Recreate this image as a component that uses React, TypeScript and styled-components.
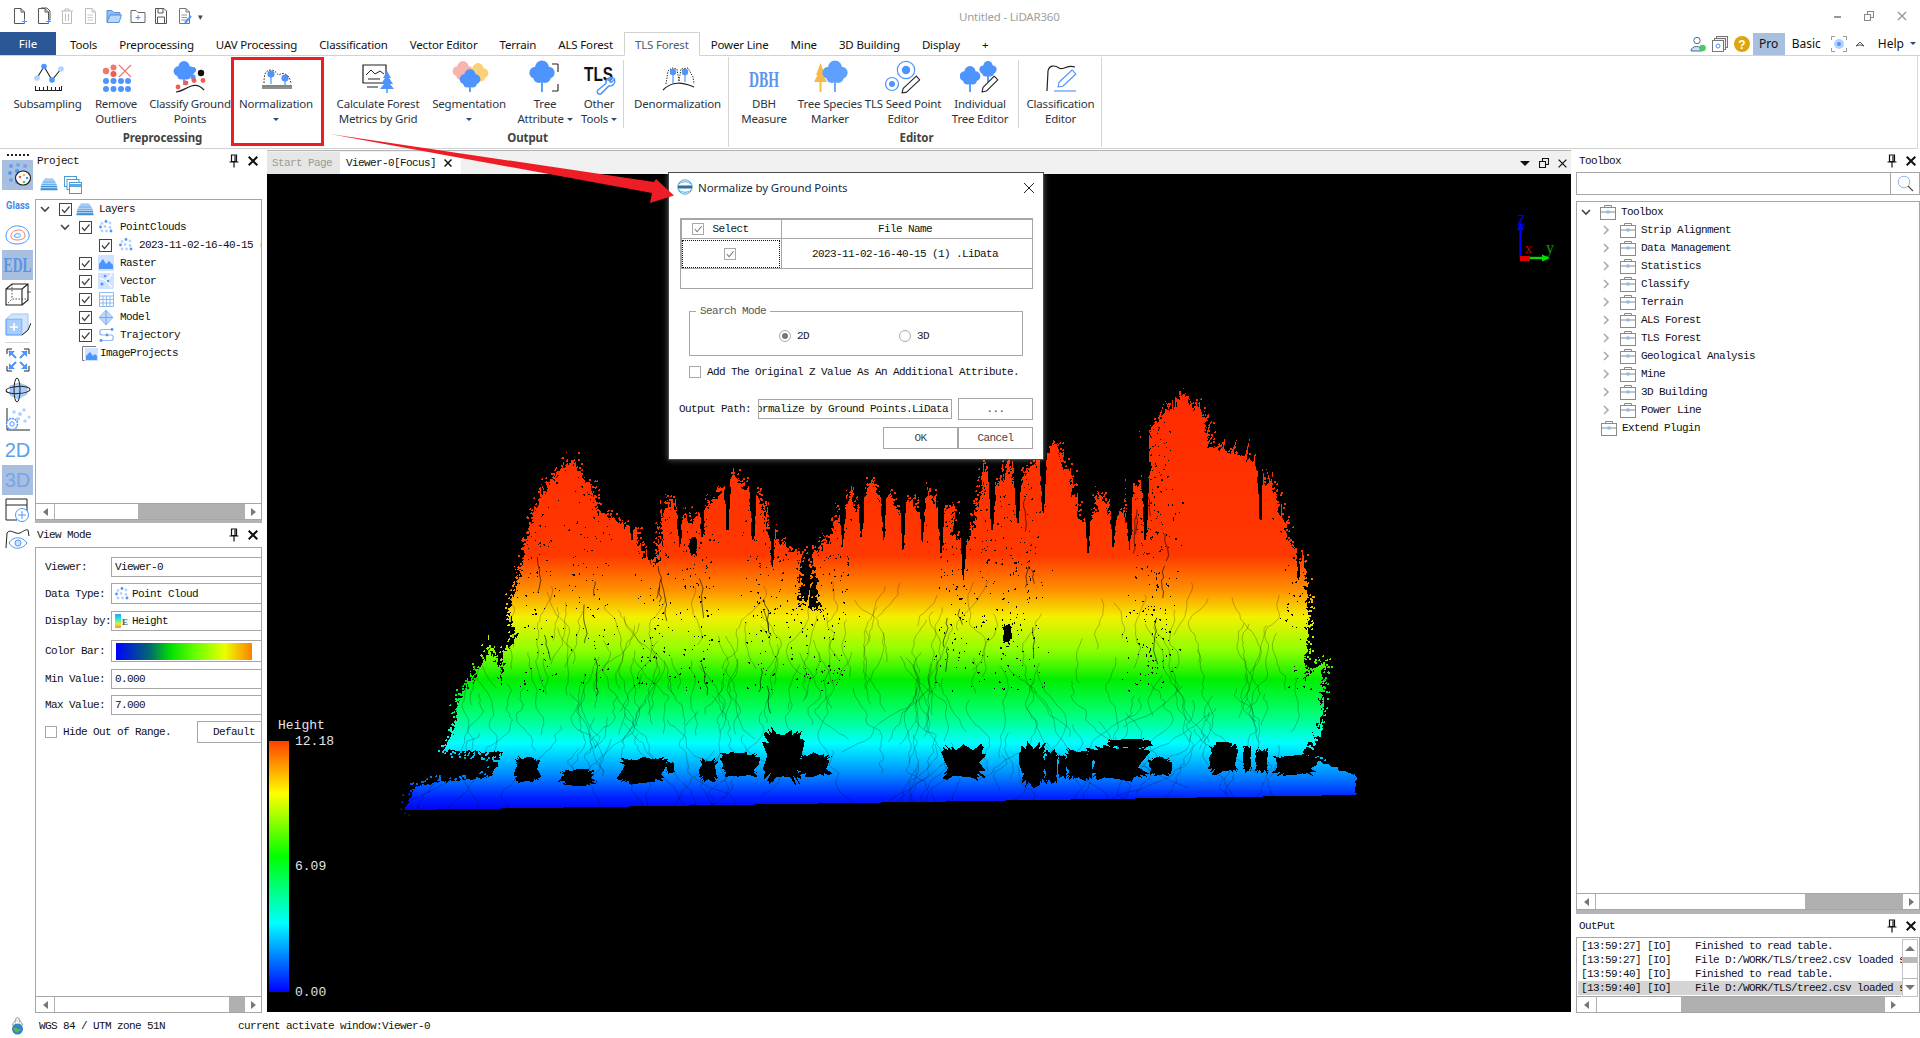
import React from "react";
import styled, { createGlobalStyle } from "styled-components";

const SANS = `"Noto Sans", "Open Sans", sans-serif`;
const MONO = `"Liberation Mono", "Noto Sans CJK SC", monospace`;
const BLUE = "#4d94ff";
const LIGHT = "#b3d2ff";
const HILITE = "#a9bfdf";
const LINE = "#a6a6a6";

const Global = createGlobalStyle`
  html, body { margin: 0; padding: 0; width: 1920px; height: 1038px; overflow: hidden; background: #fff; }
  #root { width: 1920px; height: 1038px; }
  * { box-sizing: border-box; }
`;

const Page = styled.div`
  position: relative;
  width: 1920px;
  height: 1038px;
  display: flex;
  flex-direction: column;
  overflow: hidden;
  background: #fff;
  font-family: ${SANS};
  font-size: 11.5px;
  color: #222;
`;

/* ---------- title bar ---------- */
const TitleBar = styled.div`
  height: 32px;
  display: flex;
  align-items: center;
  flex: none;
`;
const Quick = styled.div`
  width: 959px;
  padding-left: 12px;
  display: flex;
  gap: 7.5px;
  align-items: center;
`;
const QuickCaret = styled.span`
  font-size: 9px;
  color: #444;
  margin-left: -2px;
  line-height: 1;
`;
const AppTitle = styled.div`
  color: #a0a0a0;
  font-size: 11.5px;
  letter-spacing: -0.2px;
  width: 104px;
  white-space: nowrap;
`;
const WinControls = styled.div`
  margin-left: auto;
  display: flex;
  align-items: center;
  gap: 23px;
  padding-right: 13px;
`;

/* ---------- ribbon tabs ---------- */
const TabRow = styled.div`
  height: 24px;
  flex: none;
  display: flex;
  align-items: stretch;
  border-bottom: 1px solid #d2d2d2;
`;
const FileTab = styled.div`
  width: 56px;
  margin: 0 3px 0 0;
  background: #2b5797;
  color: #fff;
  display: flex;
  align-items: center;
  justify-content: center;
  font-size: 11.5px;
`;
const MenuTab = styled.div<{ $active?: boolean }>`
  padding: 1px 11px 0;
  display: flex;
  align-items: center;
  white-space: nowrap;
  font-size: 11.5px;
  letter-spacing: -0.16px;
  margin-bottom: ${(p) => (p.$active ? "-1px" : "0")};
  color: ${(p) => (p.$active ? "#4c5f70" : "#111")};
  background: #fff;
  ${(p) => (p.$active ? "border: 1px solid #d2d2d2; border-bottom: 1px solid #fff; padding: 1px 10px 0;" : "")}
`;
const TabTools = styled.div`
  margin-left: auto;
  display: flex;
  align-items: center;
  padding-right: 4px;
`;
const ModeTag = styled.div<{ $on?: boolean; $mr?: number }>`
  height: 22px;
  display: flex;
  align-items: center;
  justify-content: center;
  width: ${(p) => (p.$on ? "32px" : "auto")};
  margin-right: ${(p) => p.$mr ?? 10}px;
  background: ${(p) => (p.$on ? HILITE : "transparent")};
  font-size: 12px;
  color: #111;
`;
const DownCaret = styled.span`
  display: inline-block;
  width: 0;
  height: 0;
  border-left: 3px solid transparent;
  border-right: 3px solid transparent;
  border-top: 3px solid #2d4a77;
  vertical-align: middle;
`;

/* ---------- ribbon ---------- */
const Ribbon = styled.div`
  height: 93px;
  flex: none;
  display: flex;
  margin-right: 2px;
  border-right: 1px solid #d9d9d9;
  border-bottom: 1px solid #d2d2d2;
`;
const Group = styled.div<{ $start: number; $line?: boolean; $w: number }>`
  width: ${(p) => p.$w}px;
  padding-left: ${(p) => p.$start}px;
  height: 90px;
  margin-top: 1px;
  display: flex;
  flex-direction: column;
  border-right: ${(p) => (p.$line ? "1px solid #d5d5d5" : "none")};
`;
const GroupRow = styled.div`
  height: 73px;
  display: flex;
`;
const GroupName = styled.div<{ $pr?: number }>`
  height: 15px;
  line-height: 15px;
  text-align: center;
  font-weight: 700;
  font-size: 11.5px;
  letter-spacing: -0.1px;
  color: #434343;
  margin-right: ${(p) => p.$pr ?? 0}px;
`;
const Item = styled.div<{ $w: number }>`
  width: ${(p) => p.$w}px;
  flex: none;
  display: flex;
  flex-direction: column;
  align-items: center;
`;
const ItemIcon = styled.div`
  height: 39px;
  width: 40px;
  flex: none;
`;
const ItemText = styled.div`
  line-height: 15px;
  text-align: center;
  white-space: pre;
  color: #2c3440;
  font-size: 11.5px;
  letter-spacing: -0.2px;
`;
const InnerSep = styled.div<{ $tight?: boolean }>`
  width: 1px;
  height: 68px;
  margin: ${(p) => (p.$tight ? "3px 1px 0 0" : "3px 3px 0 3px")};
  background: #d5d5d5;
  flex: none;
`;

/* ---------- main ---------- */
const Main = styled.div`
  height: 863px;
  flex: none;
  display: flex;
  margin-top: 1px;
`;
const ToolRail = styled.div`
  width: 35px;
  flex: none;
  display: flex;
  flex-direction: column;
  padding: 0 2px 0 2px;
`;
const Grip = styled.div`
  height: 10px;
  display: flex;
  justify-content: center;
  align-items: center;
  gap: 2px;
  i { width: 2px; height: 2px; background: #222; display: block; }
`;
const RailBtn = styled.div<{ $on?: boolean }>`
  height: 30px;
  display: flex;
  align-items: center;
  justify-content: center;
  overflow: hidden;
  background: ${(p) => (p.$on ? HILITE : "transparent")};
  flex: none;
`;
const RailSep = styled.div`
  height: 1px;
  margin: 2px 3px;
  background: #d8d8d8;
  flex: none;
`;
const GlassText = styled.span`
  color: #3f8ae8;
  font: 700 11px "Roboto", sans-serif;
  transform: scaleX(0.85);
`;
const EdlText = styled.span`
  color: #5a93e6;
  font: 700 20px "Liberation Serif", serif;
  transform: scaleX(0.68);
`;
const DimText = styled.span<{ $on?: boolean }>`
  color: ${(p) => (p.$on ? "#74a6ea" : "#5d9fee")};
  font: 400 20px "Liberation Sans", sans-serif;
`;

const Dock = styled.div<{ $w: number }>`
  width: ${(p) => p.$w}px;
  flex: none;
  display: flex;
  flex-direction: column;
  background: #fff;
`;
const PanelHead = styled.div<{ $h: number }>`
  height: ${(p) => p.$h}px;
  flex: none;
  display: flex;
  align-items: center;
  padding: 0 4px 0 2px;
`;
const PanelName = styled.div<{ $pl?: number }>`
  font-family: ${MONO};
  font-size: 11px;
  letter-spacing: -0.6px;
  color: #111;
  flex: 1;
  padding-left: ${(p) => p.$pl ?? 0}px;
`;
const HeadIcons = styled.div`
  display: flex;
  align-items: center;
  gap: 9px;
`;
const PanelTools = styled.div`
  height: 27px;
  flex: none;
  display: flex;
  align-items: center;
  gap: 6px;
  padding: 0 0 2px 5px;
`;
const Box = styled.div<{ $grow?: boolean; $h?: number }>`
  ${(p) => (p.$grow ? "flex: 1; min-height: 0;" : `height: ${p.$h}px; flex: none;`)}
  border: 1px solid ${LINE};
  background: #fff;
  display: flex;
  flex-direction: column;
  overflow: hidden;
`;
const BoxBody = styled.div<{ $pt?: number }>`
  flex: 1;
  min-height: 0;
  overflow: hidden;
  padding-top: ${(p) => p.$pt ?? 0}px;
`;
const TreeRow = styled.div<{ $indent: number }>`
  height: 18px;
  display: flex;
  align-items: center;
  padding-left: ${(p) => p.$indent}px;
  white-space: nowrap;
  font-family: ${MONO};
  font-size: 11px;
  letter-spacing: -0.6px;
  color: #111;
`;
const ChevSlot = styled.span`
  display: inline-flex;
  align-items: center;
  width: 23px;
  padding-left: 4px;
  flex: none;
`;
const Slot = styled.span<{ $w: number }>`
  display: inline-flex;
  align-items: center;
  justify-content: center;
  width: ${(p) => p.$w}px;
  flex: none;
`;
const RowLabel = styled.span<{ $ml?: number }>`
  margin-left: ${(p) => p.$ml ?? 0}px;
`;
const Check = styled.span<{ $size?: number; $soft?: boolean; $mr?: number }>`
  width: ${(p) => p.$size ?? 13}px;
  height: ${(p) => p.$size ?? 13}px;
  flex: none;
  margin-right: ${(p) => p.$mr ?? 0}px;
  display: inline-flex;
  align-items: center;
  justify-content: center;
  border: 1px solid ${(p) => (p.$soft ? "#a8a8a8" : "#444")};
  background: #fff;
`;
const ThickRule = styled.div<{ $h?: number }>`
  height: ${(p) => p.$h ?? 3}px;
  flex: none;
  background: #b4b4b4;
`;
const Scroll = styled.div<{ $mr?: number }>`
  height: 16px;
  flex: none;
  display: flex;
  background: #b0b0b0;
  border-top: 1px solid ${LINE};
  margin-right: ${(p) => p.$mr ?? 0}px;
`;
const ScrollBtn = styled.div<{ $w?: number }>`
  width: ${(p) => p.$w ?? 17}px;
  flex: none;
  background: #fff;
  display: flex;
  align-items: center;
  justify-content: center;
`;
const ScrollThumb = styled.div<{ $w: number }>`
  width: ${(p) => p.$w}px;
  margin-left: 1px;
  flex: none;
  background: #fff;
`;
const ScrollTrack = styled.div`
  flex: 1;
`;
const Tri = styled.span<{ $dir: "l" | "r" | "u" | "d"; $c?: string }>`
  width: 0;
  height: 0;
  ${(p) => {
    const c = p.$c ?? "#777";
    if (p.$dir === "l") return `border-top:4px solid transparent;border-bottom:4px solid transparent;border-right:5px solid ${c};`;
    if (p.$dir === "r") return `border-top:4px solid transparent;border-bottom:4px solid transparent;border-left:5px solid ${c};`;
    if (p.$dir === "u") return `border-left:5px solid transparent;border-right:5px solid transparent;border-bottom:5px solid ${c};`;
    return `border-left:5px solid transparent;border-right:5px solid transparent;border-top:5px solid ${c};`;
  }}
`;

/* ---------- view mode form ---------- */
const FormRow = styled.div<{ $h: number; $mt: number }>`
  height: ${(p) => p.$h}px;
  margin-top: ${(p) => p.$mt}px;
  display: flex;
  align-items: center;
  padding-left: 9px;
  font-family: ${MONO};
  font-size: 11px;
  letter-spacing: -0.6px;
  color: #111;
  white-space: nowrap;
`;
const FormLabel = styled.div`
  width: 66px;
  flex: none;
`;
const Field = styled.div`
  width: 170px;
  height: 100%;
  flex: none;
  border: 1px solid ${LINE};
  display: flex;
  align-items: center;
  padding-left: 3px;
  gap: 3px;
  background: #fff;
`;
const BarSwatch = styled.div`
  width: 136px;
  height: 17px;
  margin-left: 1px;
  background: linear-gradient(90deg, #0000ff 0%, #006a70 25%, #00e000 40%, #66ff00 58%, #eaff00 80%, #ff8000 100%);
`;
const DefaultBtn = styled.div`
  width: 80px;
  margin-left: 26px;
  height: 100%;
  flex: none;
  border: 1px solid ${LINE};
  display: flex;
  align-items: center;
  padding-left: 15px;
`;

/* ---------- centre ---------- */
const Centre = styled.div`
  width: 1304px;
  flex: none;
  display: flex;
  flex-direction: column;
  margin: 0 5px 0 5px;
  border-top: 1px solid #b5b5b5;
`;
const DocTabs = styled.div`
  height: 23px;
  flex: none;
  display: flex;
  background: #f0f0f0;
  font-family: ${MONO};
  font-size: 11px;
  letter-spacing: -0.6px;
  padding-top: 1px;
`;
const DocTab = styled.div<{ $active?: boolean }>`
  width: ${(p) => (p.$active ? 121 : 73)}px;
  padding-left: ${(p) => (p.$active ? 6 : 5)}px;
  display: flex;
  align-items: center;
  gap: 8px;
  background: ${(p) => (p.$active ? "#fff" : "#e6e6e6")};
  color: ${(p) => (p.$active ? "#111" : "#9a9a9a")};
`;
const DocTools = styled.div`
  margin-left: auto;
  display: flex;
  align-items: center;
  gap: 9px;
  padding-right: 4px;
`;
const Viewer = styled.div`
  position: relative;
  height: 838px;
  flex: none;
  background: #000;
  overflow: hidden;
`;
const CloudSvg = styled.svg`
  position: absolute;
  inset: 0;
  width: 1304px;
  height: 838px;
`;
const AxisSvg = styled.svg`
  position: absolute;
  left: 1250px;
  top: 36px;
`;
const Legend = styled.div`
  position: absolute;
  left: 2px;
  top: 567px;
  width: 20px;
  height: 251px;
  background: linear-gradient(0deg, #0000ff 0%, #00ffff 27.5%, #00ff00 54%, #ffff00 79%, #ff4000 100%);
`;
const LegendText = styled.div<{ $x: number; $y: number }>`
  position: absolute;
  left: ${(p) => p.$x}px;
  top: ${(p) => p.$y}px;
  color: #e4e4e4;
  font: 13px/14px ${MONO};
`;

/* ---------- right ---------- */
const SearchRow = styled.div`
  height: 23px;
  flex: none;
  display: flex;
  border: 1px solid ${LINE};
`;
const SearchInput = styled.div`
  flex: 1;
  border-right: 1px solid ${LINE};
`;
const SearchBtn = styled.div`
  width: 28px;
  flex: none;
  display: flex;
  align-items: center;
  justify-content: center;
`;
const Gap = styled.div<{ $h: number }>`
  height: ${(p) => p.$h}px;
  flex: none;
`;
const LogWrap = styled.div`
  flex: 1;
  min-height: 0;
  display: flex;
`;
const LogList = styled.div`
  width: 325px;
  flex: none;
  padding: 1px 0 0 1px;
  overflow: hidden;
`;
const LogRow = styled.div<{ $on?: boolean }>`
  height: 14px;
  line-height: 14px;
  padding-left: 3px;
  white-space: pre;
  overflow: hidden;
  font-family: ${MONO};
  font-size: 11px;
  letter-spacing: -0.6px;
  background: ${(p) => (p.$on ? "#d4d4d4" : "transparent")};
  color: #111;
`;
const VScroll = styled.div`
  width: 16px;
  flex: none;
  margin-top: 1px;
  display: flex;
  flex-direction: column;
  border: 1px solid #c4c4c4;
  background: #b8b8b8;
  height: 58px;
`;
const VBtn = styled.div`
  height: 17px;
  background: #fff;
  display: flex;
  align-items: center;
  justify-content: center;
  flex: none;
`;
const VThumb = styled.div`
  flex: 1;
  background: #fff;
  margin-top: 6px;
  margin-bottom: 1px;
`;

/* ---------- status ---------- */
const StatusBar = styled.div`
  height: 25px;
  flex: none;
  display: flex;
  align-items: center;
  padding-left: 9px;
  font-family: ${MONO};
  font-size: 11px;
  letter-spacing: -0.6px;
  color: #111;
  background: #fff;
`;
const StatusA = styled.div`
  margin-left: 13px;
  width: 199px;
`;

/* ---------- overlays ---------- */
const Annotation = styled.svg`
  position: absolute;
  left: 0;
  top: 0;
  width: 1920px;
  height: 1038px;
  z-index: 5;
  pointer-events: none;
`;
const RedFrame = styled.div`
  position: absolute;
  left: 231px;
  top: 57px;
  width: 93px;
  height: 89px;
  border: 3px solid #ee1c25;
  z-index: 5;
`;
const Dialog = styled.div`
  position: absolute;
  left: 668px;
  top: 172px;
  width: 376px;
  height: 288px;
  z-index: 4;
  background: #fff;
  border: 1px solid #4a4a4a;
  box-shadow: 0 0 6px rgba(255, 255, 255, 0.35);
  display: flex;
  flex-direction: column;
  padding: 0 10px 0 11px;
  font-family: ${MONO};
  font-size: 11px;
  letter-spacing: -0.6px;
  color: #222;
`;
const DialogHead = styled.div`
  height: 28px;
  flex: none;
  display: flex;
  align-items: center;
  gap: 5px;
  margin-left: -3px;
  font-family: ${SANS};
  font-size: 11.5px;
  letter-spacing: -0.1px;
  color: #1a2a3a;
`;
const DialogClose = styled.div`
  margin-left: auto;
  display: flex;
  margin-right: -2px;
  margin-top: 1px;
`;
const FileTable = styled.div`
  margin-top: 17px;
  height: 71px;
  flex: none;
  border: 1px solid ${LINE};
  display: grid;
  grid-template-columns: 100px 1fr;
  grid-template-rows: 20px 30px 1fr;
`;
const HeadCell = styled.div<{ $pr?: number }>`
  display: flex;
  align-items: center;
  justify-content: center;
  gap: 8px;
  padding-right: ${(p) => p.$pr ?? 0}px;
  border-top: 1px solid ${LINE};
  border-bottom: 1px solid ${LINE};
  border-left: 1px solid ${LINE};
  color: #111;
`;
const BodyCell = styled.div<{ $focus?: boolean; $pr?: number }>`
  display: flex;
  align-items: center;
  justify-content: center;
  padding-right: ${(p) => p.$pr ?? 0}px;
  border-bottom: 1px solid ${LINE};
  border-left: 1px solid ${LINE};
  color: #111;
  ${(p) => (p.$focus ? "outline: 1px dotted #111; outline-offset: -2px;" : "")}
`;
const EmptyCell = styled.div`
  grid-column: 1 / span 2;
`;
const SearchGroup = styled.div`
  position: relative;
  margin: 22px 10px 0 9px;
  height: 45px;
  flex: none;
  border: 1px solid ${LINE};
  display: flex;
  align-items: center;
  padding: 5px 0 0 89px;
`;
const GroupLegend = styled.div`
  position: absolute;
  left: 6px;
  top: -7px;
  background: #fff;
  padding: 0 4px;
  color: #555;
`;
const RadioItem = styled.div`
  width: 120px;
  flex: none;
  display: flex;
  align-items: center;
  gap: 6px;
`;
const RadioDot = styled.span<{ $on?: boolean }>`
  width: 12px;
  height: 12px;
  border-radius: 50%;
  border: 1px solid #aaa;
  display: flex;
  align-items: center;
  justify-content: center;
  &::after {
    content: "";
    width: 6px;
    height: 6px;
    border-radius: 50%;
    background: ${(p) => (p.$on ? "#777" : "transparent")};
  }
`;
const ZRow = styled.div`
  margin: 8px 0 0 9px;
  height: 16px;
  flex: none;
  display: flex;
  align-items: center;
  gap: 6px;
  white-space: nowrap;
  color: #111;
`;
const PathRow = styled.div`
  margin: 18px 0 0 -1px;
  height: 22px;
  flex: none;
  display: flex;
  align-items: center;
  color: #111;
`;
const PathLabel = styled.div`
  width: 79px;
  flex: none;
`;
const PathInput = styled.div`
  width: 194px;
  height: 20px;
  flex: none;
  border: 1px solid ${LINE};
  overflow: hidden;
  display: flex;
  justify-content: flex-end;
  align-items: center;
  padding-right: 3px;
  white-space: nowrap;
`;
const DlgBtn = styled.div<{ $w: number; $ml?: number }>`
  width: ${(p) => p.$w}px;
  height: 22px;
  flex: none;
  margin-left: ${(p) => p.$ml ?? 0}px;
  border: 1px solid ${LINE};
  display: flex;
  align-items: center;
  justify-content: center;
  color: #444;
`;
const BtnRow = styled.div`
  margin-top: 7px;
  display: flex;
  justify-content: flex-end;
`;
const IconGap = styled.span<{ $mr?: number; $ml?: number }>`
  display: inline-flex;
  margin-right: ${(p) => p.$mr ?? 0}px;
  margin-left: ${(p) => p.$ml ?? 0}px;
`;

/* ---------- icon helpers ---------- */
const TreeShape = ({ x, y, r, c, bottom }: { x: number; y: number; r: number; c: string; bottom: number }) => (
  <g fill={c}>
    <rect x={x - 0.9} y={y} width={1.8} height={bottom - y} />
    <circle cx={x} cy={y - r * 0.7} r={r * 0.62} />
    <circle cx={x - r * 0.6} cy={y - r * 0.2} r={r * 0.55} />
    <circle cx={x + r * 0.6} cy={y - r * 0.2} r={r * 0.55} />
    <circle cx={x - r * 0.28} cy={y + r * 0.22} r={r * 0.5} />
    <circle cx={x + r * 0.28} cy={y + r * 0.22} r={r * 0.5} />
  </g>
);
const Pencil = ({ x1, y1, x2, y2, c = "#222", w = 4 }: { x1: number; y1: number; x2: number; y2: number; c?: string; w?: number }) => {
  const dx = x2 - x1, dy = y2 - y1, l = Math.hypot(dx, dy);
  const nx = (-dy / l) * w, ny = (dx / l) * w;
  const tx = x2 - (dx / l) * 4, ty = y2 - (dy / l) * 4;
  return (
    <g fill="#fff" stroke={c} strokeWidth={1.1} strokeLinejoin="round">
      <path d={`M${x1 - nx / 2} ${y1 - ny / 2}L${x1 + nx / 2} ${y1 + ny / 2}L${tx + nx / 2} ${ty + ny / 2}L${x2} ${y2}L${tx - nx / 2} ${ty - ny / 2}Z`} />
    </g>
  );
};
const I40 = ({ children }: { children: React.ReactNode }) => (
  <svg width="40" height="40" viewBox="0 0 40 40">{children}</svg>
);

const IcoSubsample = () => (
  <I40>
    <path d="M9 21L16 9.5L24 23L33 12" fill="none" stroke="#222" strokeWidth="1.1" />
    <circle cx="16" cy="9.5" r="2.8" fill={BLUE} /><circle cx="24" cy="23" r="2.8" fill={BLUE} />
    <circle cx="9" cy="21" r="2.8" fill={LIGHT} /><circle cx="33" cy="12" r="2.8" fill={LIGHT} />
    <path d="M7 33.5H34M7.5 29V33M11.5 30V33M15.5 30V33M19.5 29V33M23.5 30V33M27.5 30V33M31.5 30V33M33.5 29V33" stroke="#222" strokeWidth="1" fill="none" />
  </I40>
);
const IcoOutliers = () => (
  <I40>
    <circle cx="10" cy="14" r="3.2" fill="#f4776b" /><circle cx="17.5" cy="10.5" r="3" fill="#f4776b" /><circle cx="17.5" cy="17" r="3" fill="#f25c50" />
    <path d="M23 8L35 20M35 8L23 20" stroke="#f4776b" strokeWidth="1.2" />
    {[24, 32].map((y) => [10, 17.5, 25, 32].map((x) => <circle key={`${x}${y}`} cx={x} cy={y} r="3" fill={BLUE} />))}
  </I40>
);
const IcoGround = () => (
  <I40>
    <TreeShape x={14} y={16} r={9} c={BLUE} bottom={28} />
    <circle cx="23" cy="13" r="3" fill={BLUE} /><circle cx="23" cy="20" r="2.6" fill={BLUE} />
    <circle cx="31" cy="16" r="3.2" fill="#111" />
    <circle cx="8" cy="30" r="2.4" fill="#f25c50" /><circle cx="16" cy="26" r="2.4" fill="#f25c50" /><circle cx="24" cy="23.5" r="2.4" fill="#f25c50" /><circle cx="33" cy="23.5" r="2.4" fill="#f25c50" />
    <path d="M6 35C16 34 24 22 34 33" fill="none" stroke="#222" strokeWidth="1.2" />
  </I40>
);
const IcoNormal = () => (
  <I40>
    <circle cx="15" cy="17" r="3.6" fill={BLUE} /><rect x="14.4" y="20" width="1.2" height="7" fill={BLUE} />
    <circle cx="29" cy="21" r="3.6" fill={BLUE} /><rect x="28.4" y="24" width="1.2" height="4" fill={BLUE} />
    <path d="M8 26C8 18 9 13 15 13C20 13 21 18 23 18C26 15 33 16 35 26" fill="none" stroke="#222" strokeWidth="1" strokeDasharray="1.5 1.5" />
    <path d="M6 29H36" stroke="#222" strokeWidth="1.1" /><path d="M6 31H36" stroke="#222" strokeWidth="1" />
  </I40>
);
const IcoCalc = () => (
  <I40>
    <path d="M27 26H5V8H28V18" fill="none" stroke="#222" strokeWidth="1.2" />
    <path d="M8 18L13 13L17 17L22 14L26 17" fill="none" stroke="#222" strokeWidth="1" />
    <path d="M10 22H22M9 30H20" stroke="#222" strokeWidth="1.1" />
    <path d="M29 14L33 21H31L35 27H32L36 32H22L26 27H23L27 21H25Z" fill={BLUE} />
    <rect x="28.3" y="31" width="1.5" height="5" fill={BLUE} />
  </I40>
);
const IcoSeg = () => (
  <I40>
    <TreeShape x={14} y={16} r={9} c="#f9b3ae" bottom={24} />
    <TreeShape x={29} y={18} r={9} c="#fbd079" bottom={26} />
    <TreeShape x={21} y={24} r={9} c={BLUE} bottom={35} />
  </I40>
);
const IcoAttr = () => (
  <I40>
    <TreeShape x={17} y={18} r={11} c={BLUE} bottom={35} />
    <path d="M27 7H33M33 7V15M33 27V34M27 34H33" stroke="#222" strokeWidth="1.1" fill="none" />
  </I40>
);
const IcoOther = () => (
  <I40>
    <text x="5" y="24" fontFamily="Liberation Sans, sans-serif" fontWeight="700" fontSize="21" textLength="29" lengthAdjust="spacingAndGlyphs" fill="#111">TLS</text>
    <path d="M34 21a5 5 0 0 0-7 5.5L19 33a2.4 2.4 0 0 0 3.4 3.4l7.5-7.5a5 5 0 0 0 5.6-6.6L32 25.5L29.5 23Z" fill="#fff" stroke={BLUE} strokeWidth="1.5" />
  </I40>
);
const IcoDenorm = () => (
  <I40>
    <circle cx="15" cy="15" r="3.2" fill={BLUE} /><rect x="14.4" y="17" width="1.2" height="9" fill={BLUE} />
    <circle cx="27" cy="15" r="3.2" fill={BLUE} /><rect x="26.4" y="17" width="1.2" height="8" fill={BLUE} />
    <path d="M8 27L10 14L14 11L19 12L21 24M21 24L23 12L30 11L35 20L36 27" fill="none" stroke="#222" strokeWidth="1" strokeDasharray="1.3 1.3" />
    <path d="M5 33C14 24 24 25 36 30" fill="none" stroke="#222" strokeWidth="1.2" />
  </I40>
);
const IcoDbh = () => (
  <I40>
    <text x="5" y="30" fontFamily="Liberation Serif, serif" fontWeight="700" fontSize="23" textLength="30" lengthAdjust="spacingAndGlyphs" fill="#5b94ee">DBH</text>
  </I40>
);
const IcoSpecies = () => (
  <I40>
    <path d="M10.5 6L15 18L13.5 18L17 25H4L7.5 18L6 18Z" fill="#f7b84e" />
    <rect x="9.5" y="24" width="2" height="11" fill="#f7b84e" />
    <TreeShape x={25} y={18} r={11} c="#5da0ff" bottom={35} />
  </I40>
);
const IcoSeed = () => (
  <I40>
    <circle cx="23" cy="13" r="8.7" fill="none" stroke={BLUE} strokeWidth="1.2" /><circle cx="23" cy="13" r="4.2" fill={BLUE} />
    <circle cx="9" cy="27" r="6.5" fill="none" stroke={BLUE} strokeWidth="1.2" /><circle cx="9" cy="27" r="3" fill={BLUE} />
    <Pencil x1={35} y1={21} x2={19} y2={36} w={5} />
  </I40>
);
const IcoIndiv = () => (
  <I40>
    <TreeShape x={10} y={21} r={9} c={BLUE} bottom={35} />
    <TreeShape x={28} y={14} r={7.5} c={BLUE} bottom={25} />
    <Pencil x1={36} y1={21} x2={22} y2={35} w={5} />
  </I40>
);
const IcoClassEd = () => (
  <I40>
    <path d="M6 34L7 14C8 8 14 8 18 11C22 14 26 7 34 10" fill="none" stroke="#222" strokeWidth="1.2" />
    <Pencil x1={33} y1={15} x2={17} y2={30} c={BLUE} w={5.5} />
    <path d="M13 34H35" stroke="#6da7ff" strokeWidth="1.4" />
  </I40>
);

const QDoc = ({ c = "#555", plus, lines, ghost, edit }: { c?: string; plus?: boolean; lines?: boolean; ghost?: boolean; edit?: boolean }) => (
  <svg width="16" height="18" viewBox="0 0 16 18">
    {ghost && <path d="M5 1H11L14 4V13H5" fill="none" stroke={c} />}
    <path d="M2.5 1.5H9L12.5 5V16.5H2.5Z" fill="#fff" stroke={c} />
    <path d="M9 1.5V5H12.5" fill="none" stroke={c} />
    {lines && <path d="M4.5 8H10M4.5 10.5H10M4.5 13H10" stroke={c} strokeWidth=".8" />}
    {plus && <path d="M12.5 12V17M10 14.5H15" stroke={BLUE} />}
    {edit && <path d="M8 16L14 9" stroke={BLUE} strokeWidth="2" />}
  </svg>
);
const QTrash = () => (
  <svg width="16" height="18" viewBox="0 0 16 18" fill="none" stroke="#bbb">
    <path d="M3.5 4.5V16.5H12.5V4.5M2 4H14M6 4V2H10V4M6.5 7V14M9.5 7V14" />
  </svg>
);
const QFolder = ({ plus }: { plus?: boolean }) => (
  <svg width="16" height="18" viewBox="0 0 16 18">
    {plus ? (
      <g fill="none" stroke="#666"><path d="M1 15.5V3.5H6L8 5.5H15V15.5Z" /><path d="M8 8V13M5.5 10.5H10.5" stroke={BLUE} /></g>
    ) : (
      <g><path d="M1 15V3.5H6L8 5.5H14V8H4L1 15Z" fill="#8fbdf5" stroke="#5c92d8" /><path d="M1 15.5L4 8H15.5L13 15.5Z" fill="#b9d6fb" stroke="#5c92d8" /></g>
    )}
  </svg>
);
const QSave = () => (
  <svg width="16" height="18" viewBox="0 0 16 18" fill="none" stroke="#555">
    <path d="M2.5 1.5H11L13.5 4V16.5H2.5Z" /><path d="M5 1.5V6H10V1.5M4.5 16.5V10H11.5V16.5" />
  </svg>
);

const Pin = () => (
  <svg width="10" height="14" viewBox="0 0 10 14" fill="none" stroke="#111" strokeWidth="1.2">
    <path d="M2.5 1H7.5V7.5H2.5Z M0.5 8H9.5" /><path d="M6 1.5V7" /><path d="M5 8V13.5" />
  </svg>
);
const Cross = ({ s = 10, w = 2 }: { s?: number; w?: number }) => (
  <svg width={s} height={s} viewBox="0 0 10 10" stroke="#111" strokeWidth={w}><path d="M.7 .7L9.3 9.3M9.3 .7L.7 9.3" /></svg>
);
const Restore = ({ c = "#111", s = 10 }: { c?: string; s?: number }) => (
  <svg width={s} height={s} viewBox="0 0 10 10" fill="none" stroke={c} strokeWidth="1.1"><path d="M.5 3.5H6.5V9.5H.5ZM3.5 3.5V.5H9.5V6.5H6.5" /></svg>
);
const Chev = ({ open }: { open?: boolean }) => (
  <svg width="10" height="10" viewBox="0 0 10 10" fill="none" stroke={open ? "#444" : "#aaa"} strokeWidth="1.6">
    {open ? <path d="M1 3L5 7L9 3" /> : <path d="M3 1L7 5L3 9" />}
  </svg>
);
const Tick = ({ c = "#444", s = 11 }: { c?: string; s?: number }) => (
  <svg width={s} height={s} viewBox="0 0 11 11" fill="none" stroke={c} strokeWidth="1.2"><path d="M2 5.5L4.5 8.5L9.5 2.5" /></svg>
);
const Dots = ({ s = 14 }: { s?: number }) => {
  const pts: [number, number, string][] = [[7, 1.5, BLUE], [3, 3.5, LIGHT], [11, 3, LIGHT], [1.5, 7, BLUE], [6, 6.5, LIGHT], [11, 7.5, LIGHT], [3, 11, LIGHT], [7.5, 11, LIGHT], [12, 11, BLUE]];
  return <svg width={s} height={s} viewBox="0 0 14 14">{pts.map(([x, y, c]) => <circle key={x * 100 + y} cx={x} cy={y} r="1.4" fill={c} />)}</svg>;
};
const Layers = ({ s = 18 }: { s?: number }) => (
  <svg width={s} height={s * 0.8} viewBox="0 0 18 14">
    <path d="M5 1H13L15 4H3Z" fill="#a8cdf0" /><path d="M3 4H15L17 8H1Z" fill="#6fb0ec" /><path d="M1 8.5H17L17.5 13H.5Z" fill="#3d8fd8" /><path d="M1 6H17M1 10.5H17" stroke="#e7f2fc" strokeWidth=".8" />
  </svg>
);
const Windows = () => (
  <svg width="18" height="18" viewBox="0 0 18 18" fill="#fff" stroke="#4a9ad4">
    <rect x=".5" y=".5" width="12" height="10" /><rect x="3" y="3.5" width="12" height="10" /><rect x="5.5" y="6.5" width="12" height="11" /><rect x="6" y="8" width="11" height="3" fill="#5ca8e0" stroke="none" />
  </svg>
);
const Raster = () => (
  <svg width="16" height="16" viewBox="0 0 16 16"><rect width="16" height="16" fill="#cfe2ff" /><path d="M1 14V9L5 4L8 9L11 6L15 10V14Z" fill={BLUE} /></svg>
);
const Vector = () => (
  <svg width="16" height="16" viewBox="0 0 16 16"><rect width="16" height="16" fill="#cfe2ff" /><path d="M2 5L8 8L14 1M8 8L14 14" stroke="#fff" strokeWidth="1.2" fill="none" /><circle cx="7" cy="3" r="1.3" fill={BLUE} /><circle cx="4" cy="11" r="1.5" fill={BLUE} /><circle cx="10" cy="8" r="1.3" fill={BLUE} /></svg>
);
const TableI = () => (
  <svg width="15" height="15" viewBox="0 0 15 15" fill="none" stroke="#8db9ef"><path d="M.5 .5H14.5V14.5H.5ZM.5 4H14.5M.5 7.5H14.5M.5 11H14.5M4 4V14.5M7.5 4V14.5M11 4V14.5" /></svg>
);
const Model = () => (
  <svg width="14" height="15" viewBox="0 0 14 15"><path d="M7 0L14 7.5L7 15L0 7.5Z" fill="#bcd7fb" stroke="#7eb0ef" strokeWidth=".7" /><path d="M7 0V15M0 7.5H14" stroke="#5e9cea" strokeWidth=".8" /></svg>
);
const Traj = () => (
  <svg width="15" height="14" viewBox="0 0 15 14" fill="none" stroke="#8db9ef" strokeWidth="1.2"><path d="M13 1.5H3C0 1.5 0 7 3 7H12C15 7 15 12.5 12 12.5H2" /><circle cx="13" cy="1.5" r="1.4" fill={BLUE} stroke="none" /><circle cx="2" cy="12.5" r="1.4" fill={BLUE} stroke="none" /><circle cx="8" cy="7" r="1.4" fill={BLUE} stroke="none" /></svg>
);
const ImageProj = () => (
  <svg width="16" height="15" viewBox="0 0 16 15"><path d="M2.5 14.5H.5V.5H14" fill="none" stroke="#777" /><rect x="3" y="2" width="13" height="13" fill="#cfe2ff" /><path d="M4 14V10L8 6L11 10L13 8L15 10V14Z" fill={BLUE} /></svg>
);
const Toolbox = () => (
  <svg width="16" height="15" viewBox="0 0 16 15" fill="none" stroke="#8a8a8a"><rect x=".5" y="2.5" width="15" height="12" /><path d="M4.5 2.5V.5H11.5V2.5M.5 7H15.5" /><rect x="6.5" y="5.5" width="3" height="3" fill="#8ab8f0" stroke="none" /></svg>
);

const R = { fill: "none", stroke: "#222", strokeWidth: 1.1 };
const RailPalette = () => (
  <svg width="30" height="30" viewBox="0 0 30 30">
    {[[8, 6, .8], [15, 5, .6], [22, 6, .6], [7, 13, .9], [14, 11, 1], [21, 12, .6], [8, 20, .7], [14, 22, .6]].map(([x, y, o], i) => <circle key={i} cx={x} cy={y} r="2" fill={BLUE} opacity={o} />)}
    <ellipse cx="20" cy="18" rx="7.5" ry="7" fill="#fff" stroke="#222" strokeWidth="1.2" />
    <circle cx="17" cy="17" r="1.3" fill="#f25c50" /><circle cx="21" cy="15" r="1.3" fill="#f7b84e" /><circle cx="24" cy="18" r="1.3" fill={BLUE} /><circle cx="21" cy="22" r="1.3" fill="#4cc76a" />
  </svg>
);
const RailContour = () => (
  <svg width="26" height="24" viewBox="0 0 26 24" fill="none">
    <path d="M1 13C1 6 8 2 14 3C21 4 25 9 24 14C23 19 17 21 12 21C7 21 1 19 1 13Z" stroke={BLUE} />
    <path d="M6 13C6 9 10 7 14 7C18 7 20 10 20 13C20 16 15 17 12 17C9 17 6 16 6 13Z" stroke="#f4776b" />
    <path d="M9 13C10 11 12 10 14 11C16 11 16 14 14 14C12 15 10 14 9 13Z" stroke={BLUE} />
  </svg>
);
const RailCube = () => (
  <svg width="26" height="24" viewBox="0 0 26 24" {...R}>
    <path d="M1 6H17V22H1ZM1 6L7 1H23V17L17 22M17 6L23 1" /><path d="M1 22L7 16H23M7 1V16" strokeDasharray="1.5 1.5" strokeWidth=".8" /><path d="M22 9H26" strokeWidth=".7" />
  </svg>
);
const RailCubePlus = () => (
  <svg width="26" height="24" viewBox="0 0 26 24">
    <path d="M1 6H17V22H1Z" fill="#a9cdfa" stroke={BLUE} /><path d="M1 6L7 1H23V17L17 22V6Z" fill="#d3e5fd" stroke="#9cc3f5" /><path d="M9 10V18M5 14H13" stroke="#fff" strokeWidth="1.6" /><path d="M17 22L23 17L26 10" fill="none" stroke="#222" />
  </svg>
);
const RailExpand = () => (
  <svg width="24" height="24" viewBox="0 0 24 24">
    <path d="M1 6V1H6M18 1H23V6M1 18V23H6M18 23H23V18" fill="none" stroke="#222" />
    <path d="M3 3H9L3 9Z M21 3V9L15 3Z M3 21V15L9 21Z M21 21H15L21 15Z" fill={BLUE} />
    <path d="M3 3L10 10M21 3L14 10M3 21L10 14M21 21L14 14" stroke={BLUE} strokeWidth="2" />
  </svg>
);
const RailOrbit = () => (
  <svg width="26" height="26" viewBox="0 0 26 26">
    <path d="M5 9L14 6L22 9V17L13 22L5 18Z" fill="#a9cdfa" stroke="#7eb0ef" strokeWidth=".6" />
    <ellipse cx="13" cy="13" rx="12" ry="3.6" fill="none" stroke="#222" transform="rotate(-3 13 13)" />
    <ellipse cx="12" cy="13" rx="3" ry="12" fill="none" stroke="#222" />
  </svg>
);
const RailGear = () => (
  <svg width="26" height="26" viewBox="0 0 26 26">
    <path d="M2 1V23H25" fill="none" stroke="#222" />
    <circle cx="9" cy="5" r="1.8" fill={LIGHT} /><circle cx="15" cy="7" r="2" fill={LIGHT} /><circle cx="19" cy="3" r="1.8" fill={LIGHT} /><circle cx="13" cy="12" r="2" fill={LIGHT} /><circle cx="20" cy="14" r="1.8" fill={LIGHT} /><circle cx="24" cy="10" r="1.6" fill={LIGHT} />
    <circle cx="7" cy="17" r="5.5" fill="#fff" stroke={BLUE} strokeWidth="1.5" strokeDasharray="2 .8" /><circle cx="7" cy="17" r="2.2" fill="#fff" stroke={BLUE} />
  </svg>
);
const RailWindow = () => (
  <svg width="26" height="24" viewBox="0 0 26 24" fill="none">
    <path d="M1 1H22V19M1 1V22H12M1 7H22" stroke="#222" /><circle cx="17" cy="17" r="6.5" fill="#fff" stroke={BLUE} /><path d="M17 13V21M13 17H21" stroke={BLUE} />
  </svg>
);
const RailEye = () => (
  <svg width="26" height="24" viewBox="0 0 26 24" fill="none">
    <path d="M1 20L2 5C5 0 11 7 15 5C19 3 21 1 23 2L24 8" stroke="#222" />
    <path d="M4 15C8 8 17 8 22 15C17 22 8 22 4 15Z" fill="#fff" stroke={BLUE} /><circle cx="13" cy="15" r="3" fill="#cfe2ff" stroke={BLUE} />
  </svg>
);

/* ---------- point cloud, generated once from a seeded walk ---------- */
const buildCloud = () => {
  let seed = 20231102;
  const rnd = () => ((seed = (seed * 1664525 + 1013904223) >>> 0) / 4294967296);
  const Z = (zx: number, zy: number): [number, number] => [380 + zx / 1.568, 380 + zy / 3];
  const ctl: [number, number][] = [
    [40, 1288], [55, 1220], [100, 1205], [175, 1190], [195, 1115], [150, 1115], [100, 1110], [115, 1050], [125, 950], [150, 880], [172, 800], [190, 910], [195, 820], [215, 770], [203, 690], [225, 540], [235, 440], [260, 320], [280, 280], [300, 240], [318, 290], [330, 320], [345, 400], [370, 420], [400, 450], [410, 530], [435, 550],
    [445, 400], [458, 360], [470, 420], [485, 430], [495, 410], [520, 370], [535, 330], [555, 280], [570, 330], [580, 320], [598, 370], [605, 450], [620, 480], [640, 510], [660, 520], [655, 680], [690, 690],
    [680, 520], [695, 510], [710, 450], [735, 350], [745, 400], [770, 300], [785, 370], [800, 340], [815, 400], [830, 350], [845, 400], [860, 340], [880, 400], [900, 370], [895, 470], [925, 490],
    [935, 400], [950, 260], [965, 330], [985, 250], [1000, 330], [1020, 260], [1060, 190], [1075, 260], [1085, 320], [1095, 420], [1115, 430], [1130, 340], [1145, 430], [1160, 400], [1170, 430], [1180, 310], [1205, 340], [1210, 250], [1200, 160], [1260, 45], [1290, 100], [1300, 200], [1360, 230], [1400, 330], [1420, 460], [1450, 570], [1455, 700], [1450, 900], [1480, 840], [1475, 950], [1470, 1060], [1440, 1130], [1480, 1150], [1530, 1185], [1530, 1245], [40, 1290],
  ];
  let main = "";
  let fringe = "";
  ctl.forEach((c, i) => {
    if (i === ctl.length - 1) return;
    const [ax, ay] = Z(c[0], c[1]);
    const [bx, by] = Z(ctl[i + 1][0], ctl[i + 1][1]);
    const base = i === ctl.length - 2;
    const quiet = base || i >= ctl.length - 4;
    const n = Math.max(1, Math.ceil(Math.hypot(bx - ax, by - ay) / (base ? 40 : 2.2)));
    let nextSpike = 3 + Math.floor(rnd() * 5);
    for (let k = 0; k < n; k++) {
      const t = k / n;
      const py = ay + (by - ay) * t;
      const low = py > 740;
      const j = base ? 0 : low ? 3 : 5;
      const x = ax + (bx - ax) * t + (rnd() - 0.5) * j;
      const y = py + (rnd() - 0.5) * j;
      main += `${main ? "L" : "M"}${x.toFixed(1)} ${y.toFixed(1)}`;
      if (!low && !quiet && --nextSpike <= 0) {
        const h = 5 + rnd() * rnd() * 24;
        const lean = (rnd() - 0.5) * 12;
        main += `L${(x + lean).toFixed(1)} ${(y - h).toFixed(1)}L${(x + 1.5).toFixed(1)} ${(y + rnd() * 8).toFixed(1)}`;
        nextSpike = 2 + Math.floor(rnd() * 6);
      }
      if (!quiet) for (let f = 0; f < 2; f++) {
        const fx = x + (rnd() - 0.5) * 12, fy = y + (rnd() - 0.5) * 14;
        fringe += `M${fx.toFixed(0)} ${fy.toFixed(0)}h${rnd() > 0.5 ? 2 : 1}v2h-2z`;
      }
    }
  });
  main += "Z";
  const blob = (x0: number, x1: number, y0: number, y1: number) => {
    const [ax, ay] = Z(x0, y0), [bx, by] = Z(x1, y1);
    let d = "";
    const cx = (ax + bx) / 2, cy = (ay + by) / 2, n = 44;
    for (let k = 0; k < n; k++) {
      const a = (k / n) * Math.PI * 2;
      const q = 0.95 + rnd() * 0.6;
      const sx = Math.sign(Math.cos(a)) * Math.pow(Math.abs(Math.cos(a)), 0.4);
      const sy = Math.sign(Math.sin(a)) * Math.pow(Math.abs(Math.sin(a)), 0.4);
      d += `${d ? "L" : "M"}${(cx + (sx * (bx - ax) * q) / 2).toFixed(1)} ${(cy + (sy * (by - ay) * q) / 2).toFixed(1)}`;
    }
    return d + "Z";
  };
  const holes: [number, number, number, number][] = [[215, 245, 1140, 1195], [290, 330, 1175, 1210], [385, 440, 1140, 1200], [450, 460, 1150, 1175], [505, 525, 1145, 1195], [540, 585, 1125, 1180], [610, 655, 1065, 1190], [660, 700, 1130, 1180], [890, 940, 1110, 1185], [1010, 1040, 1105, 1200], [1045, 1060, 1125, 1200], [1065, 1075, 1130, 1190], [1080, 1110, 1120, 1190], [1120, 1190, 1105, 1185], [1150, 1200, 1080, 1100], [1210, 1235, 1140, 1180], [1305, 1340, 1100, 1170], [1355, 1365, 1105, 1165], [1375, 1390, 1115, 1170], [1410, 1460, 1130, 1180], [978, 988, 740, 785], [486, 496, 480, 520]];
  const holeD = holes.map((h) => blob(h[0], h[1], h[2], h[3])).join("");
  /* narrow gullies that separate the crowns from above */
  const gullies: [number, number, number][] = [[395, 480, 14], [470, 500, 12], [505, 470, 12], [545, 450, 10], [585, 480, 12], [615, 560, 10], [725, 500, 12], [755, 470, 12], [790, 480, 10], [820, 510, 12], [850, 490, 12], [880, 520, 12], [915, 600, 14], [960, 450, 12], [1000, 430, 12], [1040, 400, 8], [1110, 520, 14], [1150, 500, 12], [1175, 510, 10], [1200, 480, 8], [1440, 600, 8], [1380, 420, 6]];
  let gullyD = "";
  gullies.forEach(([gx, depth, w]) => {
    const [cx, yEnd] = Z(gx, depth);
    const half = w / 1.568 / 2 + 1.5;
    let left = "", right = "";
    const top = 380;
    const steps = Math.ceil((yEnd - top) / 5);
    for (let k = 0; k <= steps; k++) {
      const t = k / steps;
      const y = top + (yEnd - top) * t;
      const h = half * (1 - t * t);
      left += `L${(cx - h - rnd() * 1.6).toFixed(1)} ${y.toFixed(1)}`;
      right = `L${(cx + h + rnd() * 1.6).toFixed(1)} ${y.toFixed(1)}` + right;
    }
    gullyD += `M${cx.toFixed(1)} ${top}` + left + right + "Z";
  });
  const cols = [245, 330, 430, 500, 600, 660, 710, 900, 960, 1010, 1200, 1220, 1440];
  let specks = "";
  for (let i = 0; i < 1900; i++) {
    const c = cols[Math.floor(rnd() * cols.length)];
    const gx = (rnd() + rnd() + rnd() - 1.5) * 34;
    const [x] = Z(c + gx, 0);
    const y = 420 + Math.pow(rnd(), 1.3) * 270;
    specks += `M${x.toFixed(0)} ${y.toFixed(0)}h${rnd() > 0.7 ? 2 : 1}v${rnd() > 0.6 ? 2 : 1}h-${rnd() > 0.7 ? 2 : 1}z`;
  }
  let cracks = "";
  for (let i = 0; i < 30; i++) {
    const c = cols[Math.floor(rnd() * cols.length)];
    let [x] = Z(c + (rnd() - 0.5) * 30, 0);
    let y = 470 + rnd() * 230;
    cracks += `M${x.toFixed(1)} ${y.toFixed(1)}`;
    const n = 3 + Math.floor(rnd() * 5);
    for (let k = 0; k < n; k++) {
      x += (rnd() - 0.5) * 5;
      y += 3 + rnd() * 5;
      cracks += `L${x.toFixed(1)} ${y.toFixed(1)}`;
    }
  }
  let strands = "";
  for (let i = 0; i < 190; i++) {
    let x = 420 + rnd() * 880;
    let y = 580 + rnd() * 190;
    strands += `M${x.toFixed(1)} ${y.toFixed(1)}`;
    const n = 8 + Math.floor(rnd() * 22);
    let dx = (rnd() - 0.5) * 4;
    const wide = y > 680 ? 9 : 5;
    for (let k = 0; k < n; k++) {
      dx = dx * 0.7 + (rnd() - 0.5) * wide;
      x += dx;
      y += 2 + rnd() * 4;
      strands += `L${x.toFixed(1)} ${y.toFixed(1)}`;
    }
  }
  return { main, fringe, holeD, gullyD, specks, strands, cracks };
};
const CLOUD = buildCloud();

const PointCloud = () => (
  <CloudSvg viewBox="267 174 1304 838">
    <defs>
      <linearGradient id="heightRamp" gradientUnits="userSpaceOnUse" x1="0" y1="390" x2="0" y2="812">
        {[[390, "#ff2a00"], [555, "#ff3800"], [590, "#ff9000"], [617, "#f4f000"], [650, "#90ff00"], [680, "#00ef00"], [713, "#00ff70"], [743, "#00ffff"], [773, "#0090ff"], [798, "#0020ff"], [812, "#0000f0"]].map(([y, c]) => (
          <stop key={y as number} offset={((y as number) - 390) / 422} stopColor={c as string} />
        ))}
      </linearGradient>
    </defs>
    <path d={CLOUD.main} fill="url(#heightRamp)" shapeRendering="crispEdges" />
    <path d={CLOUD.fringe} fill="url(#heightRamp)" shapeRendering="crispEdges" />
    <path d={CLOUD.gullyD} fill="#000" shapeRendering="crispEdges" />
    <path d={CLOUD.strands} fill="none" stroke="#000" strokeOpacity="0.3" strokeWidth="0.8" />
    <path d={CLOUD.cracks} fill="none" stroke="#000" strokeOpacity="0.6" strokeWidth="1" />
    <path d={CLOUD.holeD} fill="#000" shapeRendering="crispEdges" />
    <path d={CLOUD.specks} fill="#000" shapeRendering="crispEdges" />
  </CloudSvg>
);

const Axis = () => (
  <AxisSvg width="44" height="56" viewBox="0 0 44 56">
    <text x="0" y="15" fill="#0000e0" fontFamily="Liberation Serif, serif" fontSize="14">Z</text>
    <path d="M3.5 48V17" stroke="#0000ff" strokeWidth="2.4" />
    <path d="M3.5 12L7 20H0Z" fill="#0000ff" />
    <path d="M4 48H30" stroke="#00e000" strokeWidth="2.4" />
    <path d="M33 48L25 44.5V51.5Z" fill="#00e000" />
    <rect x="3" y="46" width="10" height="5" fill="#e00000" />
    <text x="8" y="43" fill="#c00000" fontFamily="Liberation Serif, serif" fontSize="14">x</text>
    <text x="29" y="43" fill="#00a000" fontFamily="Liberation Serif, serif" fontSize="16">y</text>
  </AxisSvg>
);

/* ---------- data ---------- */
const TABS = ["Tools", "Preprocessing", "UAV Processing", "Classification", "Vector Editor", "Terrain", "ALS Forest"];
const TABS2 = ["Power Line", "Mine", "3D Building", "Display", "+"];
const TOOLS = ["Strip Alignment", "Data Management", "Statistics", "Classify", "Terrain", "ALS Forest", "TLS Forest", "Geological Analysis", "Mine", "3D Building", "Power Line"];
const LAYERS: [string, React.ReactNode][] = [
  ["Raster", <Raster />],
  ["Vector", <Vector />],
  ["Table", <TableI />],
  ["Model", <Model />],
  ["Trajectory", <Traj />],
];
const LOGS: [string, boolean][] = [
  ["[13:59:27] [IO]    Finished to read table.", false],
  ["[13:59:27] [IO]    File D:/WORK/TLS/tree2.csv loaded successfully", false],
  ["[13:59:40] [IO]    Finished to read table.", false],
  ["[13:59:40] [IO]    File D:/WORK/TLS/tree2.csv loaded successfully", true],
];

const RibbonItem = ({ w, icon, text, caret, caretBelow }: { w: number; icon: React.ReactNode; text: string; caret?: boolean; caretBelow?: boolean }) => (
  <Item $w={w}>
    <ItemIcon>{icon}</ItemIcon>
    <ItemText>
      {text}
      {caret && <> <DownCaret /></>}
      {caretBelow && <>{"\n"}<DownCaret /></>}
    </ItemText>
  </Item>
);

const HeadBtns = () => (
  <HeadIcons>
    <Pin />
    <Cross />
  </HeadIcons>
);

const HBar = ({ thumb, right = 17, left = 17, mr }: { thumb: number; right?: number; left?: number; mr?: number }) => (
  <Scroll $mr={mr}>
    <ScrollBtn $w={left}><Tri $dir="l" /></ScrollBtn>
    <ScrollThumb $w={thumb} />
    <ScrollTrack />
    <ScrollBtn $w={right}><Tri $dir="r" /></ScrollBtn>
  </Scroll>
);

export default function App() {
  return (
    <Page>
      <Global />
      <TitleBar>
        <Quick>
          <QDoc plus /><QDoc plus ghost /><QTrash /><QDoc lines c="#bbb" /><QFolder /><QFolder plus /><QSave /><QDoc lines edit c="#777" />
          <QuickCaret>▾</QuickCaret>
        </Quick>
        <AppTitle>Untitled - LiDAR360</AppTitle>
        <WinControls>
          <svg width="7" height="3"><rect width="7" height="2" y="1" fill="#999" /></svg>
          <Restore c="#888" />
          <svg width="10" height="10" viewBox="0 0 10 10" stroke="#999" strokeWidth="1.4"><path d="M1 1L9 9M9 1L1 9" /></svg>
        </WinControls>
      </TitleBar>

      <TabRow>
        <FileTab>File</FileTab>
        {TABS.map((t) => <MenuTab key={t}>{t}</MenuTab>)}
        <MenuTab $active>TLS Forest</MenuTab>
        {TABS2.map((t) => <MenuTab key={t}>{t}</MenuTab>)}
        <TabTools>
          <IconGap $mr={6}>
            <svg width="16" height="16" viewBox="0 0 16 16"><circle cx="7" cy="4.5" r="3.2" fill="#fff" stroke="#4a6a90" /><path d="M1 15C1 9 12 9 12 15Z" fill="#cfe0f5" stroke="#4a6a90" /><circle cx="12.5" cy="12" r="3.3" fill="#4cc76a" /></svg>
          </IconGap>
          <IconGap $mr={6}>
            <svg width="16" height="16" viewBox="0 0 16 16" fill="#eee" stroke="#777"><rect x="4.5" y=".5" width="11" height="11" /><rect x="2.5" y="2.5" width="11" height="11" /><rect x=".5" y="4.5" width="11" height="11" fill="#fff" /><circle cx="6" cy="10" r="2" fill="none" stroke={BLUE} /></svg>
          </IconGap>
          <IconGap $mr={3}>
            <svg width="16" height="16" viewBox="0 0 16 16"><circle cx="8" cy="8" r="8" fill="#dea60c" /><text x="8" y="12.5" textAnchor="middle" fontFamily="Liberation Sans, sans-serif" fontWeight="700" fontSize="12" fill="#fff">?</text></svg>
          </IconGap>
          <ModeTag $on $mr={7}>Pro</ModeTag>
          <ModeTag>Basic</ModeTag>
          <IconGap $mr={8}>
            <svg width="16" height="16" viewBox="0 0 16 16"><path d="M.5 4V.5H4M12 .5H15.5V4M15.5 12V15.5H12M4 15.5H.5V12" fill="none" stroke="#999" /><circle cx="8" cy="8" r="5" fill="#b3d2ff" /><circle cx="8" cy="8" r="2" fill={BLUE} /></svg>
          </IconGap>
          <IconGap $mr={13}>
            <svg width="10" height="8" viewBox="0 0 10 8" fill="none" stroke="#555"><path d="M1 6L5 2L9 6Q5 3.5 1 6Z" /></svg>
          </IconGap>
          <ModeTag $mr={6}>Help</ModeTag>
          <DownCaret />
        </TabTools>
      </TabRow>

      <Ribbon>
        <Group $start={8} $w={330}>
          <GroupRow>
            <RibbonItem w={79} icon={<IcoSubsample />} text="Subsampling" />
            <RibbonItem w={58} icon={<IcoOutliers />} text={"Remove\nOutliers"} />
            <RibbonItem w={90} icon={<IcoGround />} text={"Classify Ground\nPoints"} />
            <RibbonItem w={82} icon={<IcoNormal />} text="Normalization" caretBelow />
          </GroupRow>
          <GroupName $pr={13}>Preprocessing</GroupName>
        </Group>
        <Group $start={0} $w={399} $line>
          <GroupRow>
            <RibbonItem w={96} icon={<IcoCalc />} text={"Calculate Forest\nMetrics by Grid"} />
            <RibbonItem w={86} icon={<IcoSeg />} text="Segmentation" caretBelow />
            <RibbonItem w={66} icon={<IcoAttr />} text={"Tree\nAttribute"} caret />
            <RibbonItem w={42} icon={<IcoOther />} text={"Other\nTools"} caret />
            <InnerSep />
            <RibbonItem w={101} icon={<IcoDenorm />} text="Denormalization" />
          </GroupRow>
          <GroupName $pr={3}>Output</GroupName>
        </Group>
        <Group $start={3} $w={373} $line>
          <GroupRow>
            <RibbonItem w={64} icon={<IcoDbh />} text={"DBH\nMeasure"} />
            <RibbonItem w={68} icon={<IcoSpecies />} text={"Tree Species\nMarker"} />
            <RibbonItem w={78} icon={<IcoSeed />} text={"TLS Seed Point\nEditor"} />
            <RibbonItem w={76} icon={<IcoIndiv />} text={"Individual\nTree Editor"} />
            <InnerSep $tight />
            <RibbonItem w={81} icon={<IcoClassEd />} text={"Classification\nEditor"} />
          </GroupRow>
          <GroupName>Editor</GroupName>
        </Group>
      </Ribbon>

      <Main>
        <ToolRail>
          <Grip>{[0, 1, 2, 3, 4, 5].map((i) => <i key={i} />)}</Grip>
          <RailBtn $on><RailPalette /></RailBtn>
          <RailBtn><GlassText>Glass</GlassText></RailBtn>
          <RailBtn><RailContour /></RailBtn>
          <RailBtn $on><EdlText>EDL</EdlText></RailBtn>
          <RailBtn><RailCube /></RailBtn>
          <RailBtn><RailCubePlus /></RailBtn>
          <RailSep />
          <RailBtn><RailExpand /></RailBtn>
          <RailBtn><RailOrbit /></RailBtn>
          <RailBtn><RailGear /></RailBtn>
          <RailBtn><DimText>2D</DimText></RailBtn>
          <RailBtn $on><DimText $on>3D</DimText></RailBtn>
          <RailBtn><RailWindow /></RailBtn>
          <RailBtn><RailEye /></RailBtn>
        </ToolRail>

        <Dock $w={227}>
          <PanelHead $h={22}><PanelName>Project</PanelName><HeadBtns /></PanelHead>
          <PanelTools><Layers /><Windows /></PanelTools>
          <Box $h={321}>
            <BoxBody>
              <TreeRow $indent={0}>
                <ChevSlot><Chev open /></ChevSlot><Check><Tick /></Check><Slot $w={25}><Layers /></Slot><RowLabel $ml={2}>Layers</RowLabel>
              </TreeRow>
              <TreeRow $indent={20}>
                <ChevSlot><Chev open /></ChevSlot><Check><Tick /></Check><Slot $w={28}><Dots /></Slot><span>PointClouds</span>
              </TreeRow>
              <TreeRow $indent={63}>
                <Check><Tick /></Check><Slot $w={27}><Dots /></Slot><span>2023-11-02-16-40-15 (1)</span>
              </TreeRow>
              {LAYERS.map(([name, ic]) => (
                <TreeRow key={name} $indent={43}>
                  <Check><Tick /></Check><Slot $w={28}>{ic}</Slot><span>{name}</span>
                </TreeRow>
              ))}
              <TreeRow $indent={43}>
                <Slot $w={21}><ImageProj /></Slot><span>ImageProjects</span>
              </TreeRow>
            </BoxBody>
            <HBar thumb={83} right={16} left={18} />
          </Box>
          <ThickRule />
          <PanelHead $h={24}><PanelName>View Mode</PanelName><HeadBtns /></PanelHead>
          <Box $grow>
            <BoxBody>
              <FormRow $h={20} $mt={9}><FormLabel>Viewer:</FormLabel><Field>Viewer-0</Field></FormRow>
              <FormRow $h={21} $mt={6}><FormLabel>Data Type:</FormLabel><Field><Dots /><span>Point Cloud</span></Field></FormRow>
              <FormRow $h={20} $mt={7}>
                <FormLabel>Display by:</FormLabel>
                <Field>
                  <svg width="14" height="14" viewBox="0 0 14 14">
                    <defs><linearGradient id="dispRamp" x1="0" y1="0" x2="0" y2="1"><stop offset="0" stopColor="#22a0ff" /><stop offset=".4" stopColor="#30f0c0" /><stop offset=".7" stopColor="#e8e840" /><stop offset="1" stopColor="#ff9030" /></linearGradient></defs>
                    <rect width="6" height="14" fill="url(#dispRamp)" />
                    <text x="7" y="11" fontFamily="Liberation Serif, serif" fontWeight="700" fontSize="9" fill="#555">E</text>
                  </svg>
                  <span>Height</span>
                </Field>
              </FormRow>
              <FormRow $h={22} $mt={9}><FormLabel>Color Bar:</FormLabel><Field><BarSwatch /></Field></FormRow>
              <FormRow $h={20} $mt={7}><FormLabel>Min Value:</FormLabel><Field>0.000</Field></FormRow>
              <FormRow $h={20} $mt={6}><FormLabel>Max Value:</FormLabel><Field>7.000</Field></FormRow>
              <FormRow $h={22} $mt={6}>
                <Check $size={12} $soft $mr={6} />
                <span>Hide Out of Range.</span>
                <DefaultBtn>Default</DefaultBtn>
              </FormRow>
            </BoxBody>
            <HBar thumb={174} right={16} left={18} />
          </Box>
        </Dock>

        <Centre>
          <DocTabs>
            <DocTab>Start Page</DocTab>
            <DocTab $active>Viewer-0[Focus]<Cross s={8} w={1.8} /></DocTab>
            <DocTools>
              <Tri $dir="d" $c="#111" />
              <Restore />
              <Cross s={9} w={1.4} />
            </DocTools>
          </DocTabs>
          <Viewer>
            <PointCloud />
            <Axis />
            <Legend />
            <LegendText $x={11} $y={545}>Height</LegendText>
            <LegendText $x={28} $y={561}>12.18</LegendText>
            <LegendText $x={28} $y={686}>6.09</LegendText>
            <LegendText $x={28} $y={812}>0.00</LegendText>
          </Viewer>
        </Centre>

        <Dock $w={344}>
          <PanelHead $h={22}><PanelName $pl={1}>Toolbox</PanelName><HeadBtns /></PanelHead>
          <SearchRow>
            <SearchInput />
            <SearchBtn>
              <svg width="17" height="17" viewBox="0 0 17 17" fill="none"><circle cx="7" cy="7" r="5.8" stroke="#8ab8f0" /><path d="M11 11L16 16" stroke="#555" strokeWidth="1.2" /></svg>
            </SearchBtn>
          </SearchRow>
          <Gap $h={6} />
          <Box $h={709}>
            <BoxBody $pt={1}>
              <TreeRow $indent={0}>
                <ChevSlot><Chev open /></ChevSlot><Toolbox /><RowLabel $ml={5}>Toolbox</RowLabel>
              </TreeRow>
              {TOOLS.map((t) => (
                <TreeRow key={t} $indent={20}>
                  <ChevSlot><Chev /></ChevSlot><Toolbox /><RowLabel $ml={5}>{t}</RowLabel>
                </TreeRow>
              ))}
              <TreeRow $indent={24}>
                <Toolbox /><RowLabel $ml={5}>Extend Plugin</RowLabel>
              </TreeRow>
            </BoxBody>
            <HBar thumb={209} right={16} left={18} />
          </Box>
          <ThickRule $h={4} />
          <PanelHead $h={23}><PanelName $pl={1}>OutPut</PanelName><HeadBtns /></PanelHead>
          <Box $grow>
            <LogWrap>
              <LogList>
                {LOGS.map(([l, on], i) => <LogRow key={i} $on={on}>{l}</LogRow>)}
              </LogList>
              <VScroll>
                <VBtn><Tri $dir="u" /></VBtn>
                <VThumb />
                <VBtn><Tri $dir="d" /></VBtn>
              </VScroll>
            </LogWrap>
            <HBar thumb={84} left={19} right={16} mr={18} />
          </Box>
        </Dock>
      </Main>

      <StatusBar>
        <svg width="17" height="18" viewBox="0 0 17 18"><path d="M8.5 0L14 8H3Z" fill="#fff" stroke="#999" strokeWidth=".7" /><path d="M5 4H12M3 8L8.5 0L14 8M6.5 1V8M10.5 1V8" stroke="#aaa" strokeWidth=".6" fill="none" /><circle cx="8.5" cy="12" r="5.5" fill="#2f86c8" /><path d="M4 11C7 9 8 13 12 12C11 15 7 16 6 15Z" fill="#62b24a" /></svg>
        <StatusA>WGS 84 / UTM zone 51N</StatusA>
        <span>current activate window:Viewer-0</span>
      </StatusBar>

      <Dialog>
        <DialogHead>
          <svg width="16" height="16" viewBox="0 0 16 16" fill="none"><circle cx="8" cy="8" r="7.2" stroke="#4ea6d8" /><path d="M2 5C5 2 11 2 14 5M2 11C5 14 11 14 14 11" stroke="#4ea6d8" /><rect x="1" y="6.5" width="14" height="3" fill="#2e6f9e" /></svg>
          <span>Normalize by Ground Points</span>
          <DialogClose>
            <svg width="12" height="12" viewBox="0 0 12 12" stroke="#222"><path d="M1 1L11 11M11 1L1 11" /></svg>
          </DialogClose>
        </DialogHead>
        <FileTable>
          <HeadCell $pr={22}><Check $size={12} $soft><Tick c="#777" s={10} /></Check>Select</HeadCell>
          <HeadCell $pr={4}>File Name</HeadCell>
          <BodyCell $focus $pr={3}><Check $size={12} $soft><Tick c="#777" s={10} /></Check></BodyCell>
          <BodyCell $pr={4}>2023-11-02-16-40-15 (1) .LiData</BodyCell>
          <EmptyCell />
        </FileTable>
        <SearchGroup>
          <GroupLegend>Search Mode</GroupLegend>
          <RadioItem><RadioDot $on />2D</RadioItem>
          <RadioItem><RadioDot />3D</RadioItem>
        </SearchGroup>
        <ZRow><Check $size={12} $soft />Add The Original Z Value As An Additional Attribute.</ZRow>
        <PathRow>
          <PathLabel>Output Path:</PathLabel>
          <PathInput>Normalize by Ground Points.LiData</PathInput>
          <DlgBtn $w={75} $ml={6}>...</DlgBtn>
        </PathRow>
        <BtnRow>
          <DlgBtn $w={75}>OK</DlgBtn>
          <DlgBtn $w={75}>Cancel</DlgBtn>
        </BtnRow>
      </Dialog>

      <RedFrame />
      <Annotation viewBox="0 0 1920 1038">
        <path d="M330 134L654 182L656 179L674 195.5L650 203L652 193Z" fill="#ee1c25" />
      </Annotation>
    </Page>
  );
}
